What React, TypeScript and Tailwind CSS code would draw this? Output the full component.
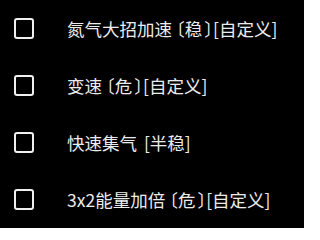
import React from "react";

type Part = { t: string; c?: string };

const L = "ml-[4px] [font-feature-settings:'halt']";
const R = "ml-[2px] [font-feature-settings:'halt']";

const items: Part[][] = [
  [{ t: "氮气大招加速" }, { t: "〔", c: L }, { t: "稳" }, { t: "〕", c: R }, { t: "[自定义]" }],
  [{ t: "变速" }, { t: "〔", c: L }, { t: "危" }, { t: "〕", c: R }, { t: "[自定义]" }],
  [{ t: "快速集气" }, { t: "\u00a0[", c: "ml-[3px]" }, { t: "半稳]" }],
  [{ t: "3x2能量加倍" }, { t: "〔", c: L }, { t: "危" }, { t: "〕", c: R }, { t: "[自定义]" }],
];

export default function App() {
  return (
    <div
      className="w-[304px] h-[228px] bg-black flex flex-col"
      style={{ fontFamily: '"Noto Sans CJK SC", "Noto Sans", sans-serif' }}
    >
      {items.map((parts, i) => (
        <div key={i} className="h-[57px] flex items-center">
          <div className="ml-[14px] w-[20px] h-[21px] border-[2.5px] border-[#f0f0f0] rounded-[3px] shrink-0" />
          <div className="ml-[33px] text-[17.5px] leading-none text-[#ececec] whitespace-nowrap">
            {parts.map((p, j) => (
              <span key={j} className={p.c ? `inline-block ${p.c}` : undefined}>
                {p.t}
              </span>
            ))}
          </div>
        </div>
      ))}
    </div>
  );
}
